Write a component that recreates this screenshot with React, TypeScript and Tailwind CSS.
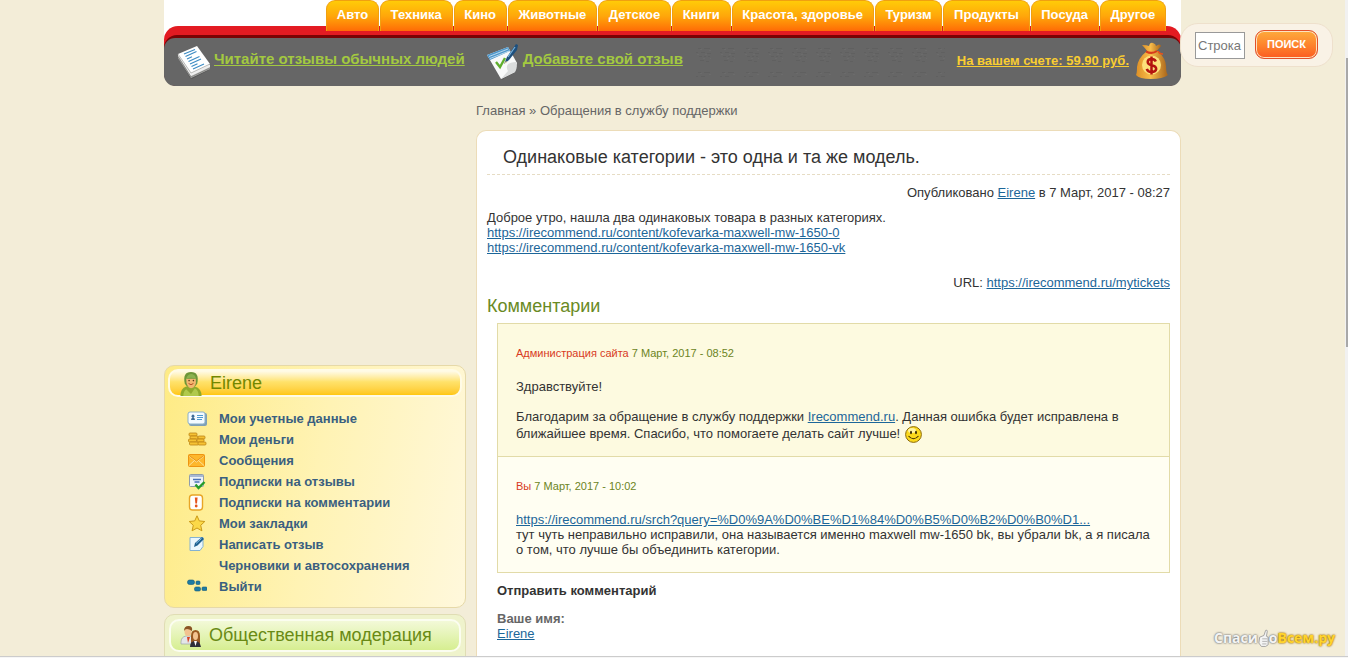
import type { ReactNode } from "react";

const tabs = ["Авто", "Техника", "Кино", "Животные", "Детское", "Книги", "Красота, здоровье", "Туризм", "Продукты", "Посуда", "Другое"];

const link = "text-[#1c6699] underline";

function PapersIcon() {
  return (
    <svg className="shrink-0" width="34" height="34" viewBox="0 0 34 34" aria-hidden="true">
      <path d="M1 12 20 3l13 18-1 4-17 9-2-1z" fill="#4a4a4a" opacity=".5" />
      <path d="M1 9v4l13 20 19-9v-4z" fill="#b4b4b2" />
      <path d="M1 9v1.500L14 31l19-9v-2z" fill="#eee" />
      <path d="M1 11.500 14 32l19-9" stroke="#7d7d7b" strokeWidth=".8" fill="none" />
      <path d="M1 9 20 1l13 18-19 9z" fill="#fff" />
      <path d="M1 9 14 28l19-9" stroke="#a9a9a7" strokeWidth=".8" fill="none" />
      <g stroke="#3d8cc4" strokeWidth="1.200">
        <path d="M7 9 18 4.500M8.500 11.500l11-5M10 14l5-2.200M11.500 16.500l11-5M13 19l11-5M14.500 21.500l6-2.700M16 24l11-5" />
      </g>
    </svg>
  );
}

function ReviewIcon() {
  return (
    <svg className="shrink-0" width="34" height="36" viewBox="0 0 34 36" aria-hidden="true">
      <path d="M2 14 21 5l10 16-1 6-14 9z" fill="#4a4a4a" opacity=".4" />
      <path d="M1 11 22 3l9 16-2 9-14 7z" fill="#f8f9f9" />
      <path d="M30 18c-8 0-11 4-8 9l-7 8 14-7q3-4 1-10z" fill="#dadcdc" />
      <path d="M1 11 22 3l2 4L4 16z" fill="#4d97cb" />
      <path d="M3 12.500 22 5M4 14.500 23 7" stroke="#d5e9f5" strokeWidth=".8" />
      <path d="m10 18 4 5 5-9" stroke="#5fae2d" strokeWidth="2.400" fill="none" />
      <path d="m18 20 3-7 9-13 2 1-1 5-8 10z" fill="#1d4f7d" />
      <path d="m22 13 7-10" stroke="#78b2dc" strokeWidth="1.200" />
      <path d="m18 20 2-3 1 1z" fill="#e6c98a" />
    </svg>
  );
}

function MoneyBagIcon() {
  return (
    <svg className="mb-[2px] shrink-0" width="34" height="38" viewBox="0 0 34 38" aria-hidden="true">
      <defs>
        <linearGradient id="bag" x2="1">
          <stop offset="0" stopColor="#dd8f26" />
          <stop offset=".45" stopColor="#f9bd4a" />
          <stop offset="1" stopColor="#a8641a" />
        </linearGradient>
      </defs>
      <path d="M7 3q5 0 7 1 1-4 4-3t3 3q4-3 5 0-3 4-6 6h-7Q10 6 7 3z" fill="url(#bag)" />
      <path d="M12 9h11q8 8 8 15t2 9q-5 4-17 4T1 33q1-2 1-8 1-9 10-16z" fill="url(#bag)" />
      <path d="M11 9.500q6 3 11-.5" stroke="#d73a1c" strokeWidth="2" fill="none" />
      <path d="M23 9q1 3 5 3" stroke="#e8521c" strokeWidth="1.500" fill="none" />
      <circle cx="16.500" cy="23" r="9.500" fill="#fde07a" />
      <path d="M20.800 19.500q-1-2.500-4.300-2.500-3.800 0-3.800 3 0 2.400 4 3.200 4.500 1 4.500 3.800-.5 3-4.700 3-3.800 0-4.700-3.200M16.500 14.500v18" stroke="#b4140e" strokeWidth="2.500" fill="none" />
    </svg>
  );
}

function UserIcon() {
  return (
    <svg className="shrink-0" width="24" height="25" viewBox="0 0 24 26" aria-hidden="true">
      <path d="M1 26q0-8 6-10h9q7 2 7 10z" fill="#8fa92c" />
      <path d="M4 26q0-5 3-7l5 5 4-6q4 2 4 8z" fill="#b0c94c" />
      <path d="M5.500 13Q3 1 12 1t6.500 12q-2 4-6.500 4t-6.500-4z" fill="#6d9638" />
      <path d="M7 8q5 0 10 0 1 9-5 10Q7 17 7 8z" fill="#f3b66f" />
      <path d="M7 8q1-5 6-5 4 1 4 5-5-2-10 0z" fill="#8bb24e" />
      <path d="M9.500 13q2.500 2.500 5 0" stroke="#b04a20" strokeWidth="1" fill="none" />
      <circle cx="10" cy="10" r=".8" fill="#553414" />
      <circle cx="14.500" cy="10" r=".8" fill="#553414" />
    </svg>
  );
}

function PeopleIcon() {
  return (
    <svg className="shrink-0" width="22" height="22" viewBox="0 0 22 22" aria-hidden="true">
      <path d="M1 17q0-5 5-6h5l3 8H1z" fill="#e3e6e8" stroke="#9ba3a8" strokeWidth=".7" />
      <path d="m7 12 1 6 2-6z" fill="#d84424" />
      <ellipse cx="8" cy="6.500" rx="3.500" ry="4.500" fill="#f2c391" />
      <path d="M4 6Q4 1 8.500 1 13 1 12 6 9 4 7 4 5 4 4 6z" fill="#8a5424" />
      <path d="M11 20V11q0-6 4.500-6T20 11v9z" fill="#9a5a22" />
      <path d="M10 22q0-6 5-6t6 6z" fill="#2f2f38" />
      <ellipse cx="15.500" cy="11" rx="2.500" ry="4" fill="#f2c391" />
      <path d="m14 16 1.500 5 1.500-5z" fill="#fff" />
    </svg>
  );
}

const icons: Record<string, ReactNode> = {
  card: (
    <>
      <rect x="2" y="3" width="18" height="13" rx="2" fill="#7fa0b6" />
      <rect x="1" y="2" width="17" height="12" rx="2" fill="#f4fbff" stroke="#8bb0c8" />
      <path d="M4 10q0-2 1.500-2.500a1.500 1.500 0 1 1 1 0Q8 8 8 10z" fill="#3d6c98" />
      <path d="M10 5.500h6M10 7.500h6M10 9.500h5" stroke="#4f9ad0" />
    </>
  ),
  coins: (
    <g fill="#f6c234" stroke="#bd8415" strokeWidth=".8">
      <rect x="2" y="2" width="8" height="3" rx="1" />
      <rect x="3" y="5" width="8" height="3" rx="1" />
      <rect x="1.500" y="8" width="8" height="3" rx="1" />
      <rect x="2.500" y="11" width="9" height="3" rx="1" />
      <rect x="11" y="5" width="7" height="3" rx="1" />
      <rect x="10" y="8" width="7" height="3" rx="1" />
      <rect x="11" y="11" width="8" height="3" rx="1" />
    </g>
  ),
  mail: (
    <>
      <rect x="1.500" y="2.500" width="16" height="12" rx="1" fill="#fdb72c" stroke="#ee9410" />
      <path d="m2 4 7.500 6L17 4M2 13.500 7.500 8.500M17 13.500l-5.500-5" stroke="#fce19a" fill="none" />
      <path d="m2 3.500 7.500 5.500L17 3.500" stroke="#e38a0c" fill="none" strokeWidth=".8" />
    </>
  ),
  check: (
    <>
      <rect x="2.500" y="1.500" width="14" height="12" rx="1" fill="#eef3f8" stroke="#8f9dab" />
      <path d="M3 3h13" stroke="#90a6c8" strokeWidth="1.500" />
      <path d="M6 6.500h8M7.500 9h5" stroke="#4a73b8" strokeWidth="1.500" />
      <path d="m8.500 11.500 3 3.500 6-6" stroke="#249c28" strokeWidth="2.400" fill="none" />
    </>
  ),
  alert: (
    <>
      <rect x="2.500" y="1" width="13" height="15" rx="3" fill="#fff" stroke="#e8a526" strokeWidth="1.400" />
      <path d="M7.800 3.500h2.800L10 9.500H8.400z" fill="#e5531c" />
      <circle cx="9.200" cy="12" r="1.400" fill="#e5531c" />
    </>
  ),
  star: <path d="m10 .8 2.300 5.100 5.500.6-4.100 3.800 1.200 5.500L10 13l-4.900 2.800 1.200-5.500-4.100-3.800 5.500-.6z" fill="#fbd948" stroke="#cb9a17" />,
  write: (
    <>
      <path d="M3 1.500h13v9l-3 4H3z" fill="#eaf6fd" stroke="#84b2d2" />
      <path d="m7 11 1-4 7-6 2 2-6.500 6.500z" fill="#1e608f" />
      <path d="m9 7.500 5.500-5" stroke="#7fbce4" />
    </>
  ),
  none: null,
  exit: (
    <g fill="#1d7ba3" stroke="#165a7c" strokeWidth=".6">
      <rect x=".5" y="2" width="7" height="4.500" rx="2" />
      <rect x="9" y="3" width="4" height="3.500" rx="1" />
      <rect x="7.500" y="9" width="6" height="4" rx="1.500" />
      <rect x="15" y="9" width="5" height="3.500" rx="1" />
    </g>
  ),
};

const menu: [string, string][] = [
  ["card", "Мои учетные данные"],
  ["coins", "Мои деньги"],
  ["mail", "Сообщения"],
  ["check", "Подписки на отзывы"],
  ["alert", "Подписки на комментарии"],
  ["star", "Мои закладки"],
  ["write", "Написать отзыв"],
  ["none", "Черновики и автосохранения"],
  ["exit", "Выйти"],
];

function Smile() {
  return (
    <svg className="-my-1 ml-1 inline-block align-middle" width="19" height="17" viewBox="0 0 19 17" aria-hidden="true">
      <circle cx="9.500" cy="8.500" r="7.900" fill="#fbd91c" stroke="#8c6a0c" />
      <ellipse cx="8" cy="4.500" rx="4" ry="2.500" fill="#fff4a0" />
      <ellipse cx="7" cy="6.500" rx="1" ry="1.800" fill="#3a2a04" />
      <ellipse cx="12" cy="6.500" rx="1" ry="1.800" fill="#3a2a04" />
      <path d="M4.500 10q5 5.500 10 0" stroke="#3a2a04" strokeWidth="1.100" fill="none" />
    </svg>
  );
}

function Header() {
  return (
    <header className="grid grid-cols-[1fr_minmax(0,1017px)_1fr]">
      <div className="col-start-2 bg-[linear-gradient(#fff_46px,transparent_46px)]">
        <nav className="relative z-10 mr-[15px] ml-[162px] flex gap-px">
          {tabs.map((t) => (
            <a key={t} href="#" className="h-[31px] flex-auto rounded-t-[9px] border-x border-t border-[#f0a010] bg-linear-to-b from-[#ffcb08] via-[#ffa70a] to-[#ff6a06] px-[9px] pt-[6px] text-center text-[13px] leading-[16px] font-bold whitespace-nowrap text-white">
              {t}
            </a>
          ))}
        </nav>
        <div className="-mt-[5px] rounded-[14px] bg-[#e31b22] pt-[9px]">
          <div className="rounded-[13px] bg-[#7a0305] pt-[3px]">
            <div className="flex h-12 items-center rounded-[11px] bg-[#666] pr-[12px] pl-[13px]">
              <PapersIcon />
              <a href="#" className="mr-[21px] ml-[3px] pb-[6px] text-[15px] leading-[18px] font-bold whitespace-nowrap text-[#a3c940] underline">Читайте отзывы обычных людей</a>
              <ReviewIcon />
              <a href="#" className="ml-[3px] pb-[6px] text-[15px] leading-[18px] font-bold whitespace-nowrap text-[#a3c940] underline">Добавьте свой отзыв</a>
              <svg className="mx-3 h-[30px] min-w-0 flex-1" aria-hidden="true">
                <defs>
                  <pattern id="dots" width="24" height="24" patternUnits="userSpaceOnUse">
                    <path d="M3 1.500h3M9 1.500h6M1 5.500h2M6 5.500h4M12 6.500h4M4 9.500h3M9 9.500h2M13 9.500h2M5 13.500h4M11 14.500h3" stroke="#585858" />
                    <path d="M5 2.500h2M14 3.500h2M2 7.500h2M10 7.500h2M8 11.500h2M15 11.500h1" stroke="#727272" />
                  </pattern>
                </defs>
                <rect width="100%" height="100%" fill="url(#dots)" opacity=".4" />
              </svg>
              <a href="#" className="mr-[6px] pb-[3px] text-[13px] leading-[15px] font-bold whitespace-nowrap text-[#f9cd31] underline">На вашем счете: 59.90 руб.</a>
              <MoneyBagIcon />
            </div>
          </div>
        </div>
      </div>
      <form className="mt-[23px] mr-3 -ml-px flex h-11 items-center gap-[10px] rounded-[18px] border border-[#eee0cc] bg-[#f9f2e6] pl-[14px]">
        <input aria-label="Строка поиска" placeholder="Строка" className="h-[27px] w-[50px] border border-[#999] bg-white px-[2px] text-[13px] text-[#555] placeholder:text-[#777]" />
        <button type="button" className="mb-[2px] h-[29px] w-[63px] rounded-[9px] border border-[#e2502a] bg-linear-to-b from-[#fdaa3c] to-[#fb5a20] text-[11px] font-bold text-white shadow-[inset_0_0_0_1px_#fde3c0]">ПОИСК</button>
      </form>
    </header>
  );
}

function Sidebar() {
  return (
    <aside className="flex flex-col gap-[6px] pt-[279px]">
      <section className="rounded-[10px] border border-[#e6d9a8] bg-[linear-gradient(100deg,#feeb85,#fff3b4_50%,#fff8dc)] px-[3px] pt-[3px] pb-[10px]">
        <h2 className="flex h-7 items-center gap-[7px] rounded-[10px] border-2 border-[#fffbe6] bg-linear-to-b from-[#fffbe8] via-[#ffe26a] via-45% to-[#ffc70a] pl-[9px] text-[18px] text-[#738700]">
          <UserIcon />
          Eirene
        </h2>
        <ul className="pt-[11px] pl-[19px]">
          {menu.map(([icon, label]) => (
            <li key={label}>
              <a href="#" className="flex h-[21px] items-center gap-3 text-[13px] font-bold text-[#3a5f80]">
                <svg width="20" height="17" viewBox="0 0 20 17" aria-hidden="true">{icons[icon]}</svg>
                {label}
              </a>
            </li>
          ))}
        </ul>
      </section>
      <section className="rounded-[10px] border border-[#e0ddb4] bg-[#eff3cc] px-1 pt-1 pb-10">
        <h2 className="flex h-[33px] items-center gap-[7px] rounded-[10px] border-2 border-[#fbfdf0] bg-linear-to-b from-[#f3f9d8] to-[#d6ee90] pl-[9px] text-[18px] whitespace-nowrap text-[#698a14]">
          <PeopleIcon />
          Общественная модерация
        </h2>
      </section>
    </aside>
  );
}

function Article() {
  return (
    <main className="flex flex-col pt-[17px] text-[#333]">
      <p className="leading-[15px] text-[#666]"><a href="#">Главная</a> » <a href="#">Обращения в службу поддержки</a></p>
      <article className="mt-3 flex-1 rounded-t-[10px] border border-b-0 border-[#ecdcb8] bg-white px-[10px] pt-[15px]">
        <h1 className="border-b border-dashed border-[#e6dcc4] pb-[6px] pl-4 text-[18px] leading-[22px]">Одинаковые категории - это одна и та же модель.</h1>
        <p className="mt-[10px] text-right">Опубликовано <a href="#" className={link}>Eirene</a> в 7 Март, 2017 - 08:27</p>
        <p className="mt-[10px]">
          Доброе утро, нашла два одинаковых товара в разных категориях.<br />
          <a href="#" className={link}>https://irecommend.ru/content/kofevarka-maxwell-mw-1650-0</a><br />
          <a href="#" className={link}>https://irecommend.ru/content/kofevarka-maxwell-mw-1650-vk</a>
        </p>
        <p className="mt-5 text-right">URL: <a href="#" className={link}>https://irecommend.ru/mytickets</a></p>
        <h2 className="mt-[5px] text-[18px] leading-[22px] text-[#698a24]">Комментарии</h2>
        <div className="mt-[6px] ml-[10px] border border-[#e2dba8]">
          <section className="border-b border-[#e2dba8] bg-[#fdfae0] px-[18px] pt-[22px] pb-[14px]">
            <p className="text-[11px] text-[#6c8424]"><a href="#" className="text-[#d83a24]">Администрация сайта</a> 7 Март, 2017 - 08:52</p>
            <p className="mt-[18px]">Здравствуйте!</p>
            <p className="mt-[14px] leading-[17px]">Благодарим за обращение в службу поддержки <a href="#" className={link}>Irecommend.ru</a>. Данная ошибка будет исправлена в ближайшее время. Спасибо, что помогаете делать сайт лучше!<Smile /></p>
          </section>
          <section className="bg-[#fffef2] px-[18px] pt-[22px] pb-[15px]">
            <p className="text-[11px] text-[#6c8424]"><a href="#" className="text-[#d83a24]">Вы</a> 7 Март, 2017 - 10:02</p>
            <p className="mt-[18px]">
              <a href="#" className={link}>https://irecommend.ru/srch?query=%D0%9A%D0%BE%D1%84%D0%B5%D0%B2%D0%B0%D1...</a><br />
              тут чуть неправильно исправили, она называется именно maxwell mw-1650 bk, вы убрали bk, а я писала о том, что лучше бы объединить категории.
            </p>
          </section>
        </div>
        <div className="pl-[10px]">
          <h3 className="mt-[10px] font-bold">Отправить комментарий</h3>
          <p className="mt-[13px] font-bold text-[#666]">Ваше имя:</p>
          <a href="#" className={link}>Eirene</a>
        </div>
      </article>
    </main>
  );
}

function Badge() {
  return (
    <div className="absolute right-[10px] bottom-[8px] flex items-center font-['Open_Sans',sans-serif] text-[14px] leading-[20px] font-bold">
      <span className="text-[#f4f4f4] [text-shadow:0_0_2px_#777,0_0_2px_#777]">Спаси</span>
      <svg width="11" height="20" viewBox="0 0 13 22" aria-hidden="true">
        <path d="M2 10 7 8l2-6q2-1 2 1l-1 6 2 1v9l-3 2H4l-3-4z" fill="#f4f4f4" stroke="#999" />
        <path d="M5 12h6M5 15h6M5 18h5" stroke="#aaa" />
      </svg>
      <span className="text-[#f4f4f4] [text-shadow:0_0_2px_#777,0_0_2px_#777]">о</span>
      <span className="text-[#ffd42e] [text-shadow:0_0_2px_#a87800,0_0_2px_#a87800]">Всем.ру</span>
    </div>
  );
}

export default function App() {
  return (
    <div className="flex h-screen flex-col overflow-hidden bg-[#f3edd8] font-['Liberation_Sans',Arial,sans-serif] text-[13px] leading-[15px]">
      <div className="flex min-h-0 flex-1">
        <div className="relative flex min-w-0 flex-1 flex-col overflow-hidden">
          <Header />
          <div className="mx-auto grid min-h-0 w-full max-w-[1017px] flex-1 grid-cols-[302px_minmax(0,1fr)] gap-[10px]">
            <Sidebar />
            <Article />
          </div>
          <Badge />
        </div>
        <div className="w-[3px] bg-[#f1f1f1] pt-[58px] pl-px">
          <div className="h-[289px] bg-[#a8a8a8]" />
        </div>
      </div>
      <div className="h-[2px] border-t border-[#ccc] bg-[#f6f6f6]" />
    </div>
  );
}
